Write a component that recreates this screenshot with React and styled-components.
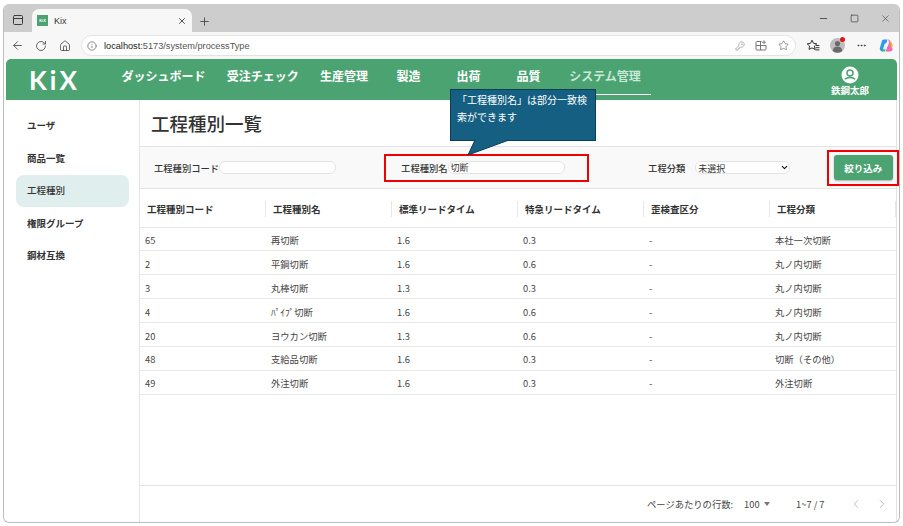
import React from 'react';
import styled, { createGlobalStyle } from 'styled-components';
import {
  PanelTop, X, Plus, Minus, Square, ArrowLeft, RotateCw, Home, Info, KeyRound, Star, ChevronLeft, ChevronRight, ChevronDown, MoreHorizontal,
} from 'lucide-react';

const GlobalStyle = createGlobalStyle`
  html, body { margin: 0; padding: 0; background: #fff; }
  body { font-family: "Noto Sans CJK JP", "Noto Sans", sans-serif; color: #333; }
  * { box-sizing: border-box; }
`;

const navItems = ['ダッシュボード', '受注チェック', '生産管理', '製造', '出荷', '品質', 'システム管理'];
const sideItems = ['ユーザ', '商品一覧', '工程種別', '権限グループ', '鋼材互換'];
const columns = ['工程種別コード', '工程種別名', '標準リードタイム', '特急リードタイム', '歪検査区分', '工程分類'];
const rows = [
  ['65', '再切断', '1.6', '0.3', '-', '本社一次切断'],
  ['2', '平鋼切断', '1.6', '0.6', '-', '丸ノ内切断'],
  ['3', '丸棒切断', '1.3', '0.3', '-', '丸ノ内切断'],
  ['4', 'ﾊﾟｲﾌﾟ切断', '1.6', '0.6', '-', '丸ノ内切断'],
  ['20', 'ヨウカン切断', '1.3', '0.6', '-', '丸ノ内切断'],
  ['48', '支給品切断', '1.6', '0.3', '-', '切断（その他）'],
  ['49', '外注切断', '1.6', '0.3', '-', '外注切断'],
];

const Page = styled.div`
  width: 903px;
  height: 526px;
  padding: 4px 3px 3px;
  overflow: hidden;
`;
const Browser = styled.div`
  height: 100%;
  display: flex;
  flex-direction: column;
  border: 1px solid #bdbdbd;
  border-top: 0;
  border-radius: 6px;
  overflow: hidden;
  background: #fff;
`;
const TabStrip = styled.div`
  height: 28px;
  flex: none;
  background: #cdcdcd;
  display: flex;
  align-items: flex-end;
  color: #333;
`;
const IconSlot = styled.div`
  width: ${(p) => p.$w || 24}px;
  height: 22px;
  flex: none;
  display: flex;
  align-items: center;
  justify-content: center;
  color: ${(p) => p.$color || '#3c3c3c'};
`;
const TabIcon = styled(IconSlot)`
  width: 28px;
  height: 24px;
`;
const Tab = styled.div`
  width: 160px;
  height: 23px;
  background: #f7f7f7;
  border-radius: 7px 7px 0 0;
  display: flex;
  align-items: center;
  padding: 0 5px;
  font-family: "Liberation Sans", sans-serif;
  font-size: 9px;
`;
const Favicon = styled.div`
  width: 11px;
  height: 11px;
  background: #4ca372;
  color: #fff;
  font-size: 4px;
  line-height: 11px;
  text-align: center;
  margin-right: 6px;
  font-weight: 700;
`;
const TabTitle = styled.span`
  flex: 1;
`;
const WindowControls = styled.div`
  margin-left: auto;
  height: 100%;
  display: flex;
  align-items: center;
  gap: 10px;
  padding-right: 3px;
`;
const Toolbar = styled.div`
  height: 27px;
  flex: none;
  background: #f7f7f7;
  display: flex;
  align-items: center;
  padding-left: 1px;
`;
const UrlBar = styled.div`
  width: 715px;
  height: 21px;
  margin-left: 4px;
  background: #fff;
  border: 1px solid #e3e3e3;
  border-radius: 11px;
  display: flex;
  align-items: center;
  padding: 0 1px 0 5px;
  font-family: "Liberation Sans", sans-serif;
  font-size: 9.2px;
  color: #555;
`;
const UrlHost = styled.span`
  color: #222;
`;
const UrlText = styled.div`
  flex: 1;
  margin-left: 7px;
`;
const AvatarWrap = styled(IconSlot)`
  position: relative;
`;
const AvatarDot = styled.span`
  position: absolute;
  top: 2px;
  right: 3px;
  width: 5px;
  height: 5px;
  border-radius: 50%;
  background: #e81123;
`;
const FavoritesSlot = styled(IconSlot)`
  margin-left: 3px;
`;
const Content = styled.div`
  flex: 1;
  min-height: 0;
  display: flex;
  flex-direction: column;
  padding: 0 2px 0 2px;
`;
const Header = styled.header`
  height: 41px;
  flex: none;
  background: #4ca372;
  border-radius: 5px 5px 0 0;
  display: flex;
  align-items: center;
  color: #fff;
`;
const Logo = styled.div`
  width: 105px;
  padding-left: 23px;
  font-family: "Lato", sans-serif;
  font-weight: 700;
  font-size: 26px;
  letter-spacing: 3px;
  line-height: 1;
`;
const Nav = styled.nav`
  display: flex;
  height: 100%;
`;
const NavItem = styled.div`
  min-width: 60px;
  padding: 0 10.6px 3px;
  display: flex;
  align-items: center;
  justify-content: center;
  font-size: 12px;
  font-weight: 700;
  color: ${(p) => (p.$active ? '#c9e8d6' : '#fff')};
  border-bottom: ${(p) => (p.$active ? '1px solid #fff' : '0')};
  height: 36px;
  align-self: flex-start;
`;
const UserBox = styled.div`
  margin-left: auto;
  width: 40px;
  margin-right: 27px;
  display: flex;
  flex-direction: column;
  align-items: center;
  font-size: 9.5px;
  font-weight: 700;
  line-height: 12px;
  white-space: nowrap;
  padding-top: 2px;
`;
const Body = styled.div`
  flex: 1;
  min-height: 0;
  display: flex;
`;
const Sidebar = styled.aside`
  width: 134px;
  flex: none;
  border-right: 1px solid #e4e4e4;
  padding: 9.5px 10px 0 10px;
`;
const SideItem = styled.div`
  height: 32.5px;
  padding: 0 0 1px 11px;
  display: flex;
  align-items: center;
  font-size: 9.5px;
  font-weight: ${(p) => (p.$active ? 500 : 700)};
  color: #333;
  border-radius: 8px;
  background: ${(p) => (p.$active ? '#e0efee' : 'transparent')};
`;
const Main = styled.main`
  flex: 1;
  min-width: 0;
  display: flex;
  flex-direction: column;
  border-right: 1px solid #e4e4e4;
`;
const TitleRow = styled.div`
  height: 47px;
  flex: none;
  padding: 10px 0 0 11px;
  border-bottom: 1px solid #e4e4e4;
`;
const Title = styled.h1`
  margin: 0;
  font-size: 18.5px;
  font-weight: 500;
  line-height: 27px;
  color: #333;
`;
const FilterBar = styled.div`
  height: 42px;
  flex: none;
  background: #f9f9f9;
  border-bottom: 1px solid #e4e4e4;
  display: flex;
  align-items: center;
  padding-left: 14px;
  position: relative;
`;
const Field = styled.div`
  flex: none;
  display: flex;
  align-items: center;
  font-size: 9.3px;
  font-weight: 500;
  white-space: nowrap;
`;
const HighlightField = styled(Field)`
  height: 28px;
  width: 205px;
  margin-left: 48px;
  padding-left: 15px;
  border: 2px solid #f00000;
`;
const SelectField = styled(Field)`
  margin-left: 59px;
`;
const TextInput = styled.input`
  width: 117px;
  height: 13px;
  padding: 0 2px;
  border: 1px solid #e3e3e3;
  border-radius: 6px;
  background: #fff;
  font-family: inherit;
  font-size: 9px;
  color: #333;
  outline: none;
`;
const SelectWrap = styled.div`
  position: relative;
  margin-left: 10px;
  width: 95px;
  height: 13px;
`;
const SelectBox = styled.select`
  width: 100%;
  height: 100%;
  display: block;
  padding: 0 0 0 2px;
  border: 1px solid #e3e3e3;
  border-radius: 6px;
  background: #fff;
  font-family: inherit;
  font-size: 9px;
  color: #333;
  appearance: none;
  outline: none;
`;
const SelectArrow = styled(ChevronDown)`
  position: absolute;
  right: 1px;
  top: 2px;
  color: #111;
  pointer-events: none;
`;
const ButtonFrame = styled.div`
  margin-left: 37px;
  width: 72px;
  height: 36px;
  flex: none;
  border: 2px solid #f00000;
  display: flex;
  align-items: center;
  justify-content: center;
  background: #f9f9f9;
`;
const FilterButton = styled.button`
  width: 59px;
  height: 25px;
  border: 0;
  border-radius: 3px;
  background: #4ca372;
  color: #fff;
  font-family: inherit;
  font-size: 9.5px;
  font-weight: 700;
  box-shadow: 0 1px 2px rgba(0, 0, 0, 0.3);
`;
const Callout = styled.div`
  position: absolute;
  left: 310px;
  top: -58px;
  width: 146px;
  height: 52px;
  padding: 1px 5px 0 6px;
  background: #156082;
  border: 1px solid #0e3d54;
  color: #fff;
  font-size: 10px;
  line-height: 17px;
  z-index: 5;
`;
const CalloutTail = styled.svg`
  position: absolute;
  left: 16px;
  top: 49px;
`;
const Table = styled.div`
  flex: 1;
  min-height: 0;
`;
const HeadRow = styled.div`
  height: 38.5px;
  padding-top: 2px;
  display: grid;
  grid-template-columns: repeat(6, 126px);
  align-items: center;
  border-bottom: 1px solid #e8e8e8;
`;
const HeadCell = styled.div`
  height: 16px;
  padding-left: 7px;
  display: flex;
  align-items: center;
  font-size: 9.5px;
  font-weight: 700;
  color: #333;
  border-right: 1px solid #e8e8e8;
`;
const DataRow = styled.div`
  height: 23.9px;
  display: grid;
  grid-template-columns: repeat(6, 126px);
  align-items: center;
  border-bottom: 1px solid #e8e8e8;
`;
const Cell = styled.div`
  padding: 2px 0 0 5px;
  font-size: 9.3px;
  color: #444;
  white-space: nowrap;
`;
const Footer = styled.div`
  height: 37px;
  flex: none;
  border-top: 1px solid #e4e4e4;
  display: flex;
  align-items: center;
  padding-left: 507px;
  font-size: 9.3px;
  color: #444;
`;
const PageSize = styled.div`
  margin-left: 11px;
  width: 52px;
  display: flex;
  align-items: center;
  gap: 4px;
`;
const Caret = styled.span`
  width: 0;
  height: 0;
  border-left: 3.5px solid transparent;
  border-right: 3.5px solid transparent;
  border-top: 4px solid #777;
`;
const PageRange = styled.div`
  width: 53px;
`;
const PagerIcons = styled.div`
  display: flex;
  gap: 12px;
  color: #b5b5b5;
`;

function Copilot() {
  return (
    <svg width="15" height="15" viewBox="0 0 16 16">
      <path d="M5 1.5h4L6.5 12 4 14.5C2 14.5.5 13 .8 11L3 3.5C3.3 2.3 4 1.5 5 1.5z" fill="#2f9be8" />
      <path d="M9 1.5c1.5 0 2.6.7 3 2l2.4 8c.3 1.5-.8 3-2.5 3H7l1.5-4.5 2-7z" fill="#f06ab0" />
      <path d="M6 6l5-2.5-1 4-4 6.5-1.5-3z" fill="#fff" opacity="0.85" />
      <path d="M11.5 3.5c1.5.2 3 2 3.2 5L13 11z" fill="#f8b133" />
      <path d="M2 12c2 1 4 .5 5-.5l-.5 3H3.5z" fill="#35c26e" />
    </svg>
  );
}

function ProfileAvatar() {
  return (
    <svg width="15" height="15" viewBox="0 0 15 15">
      <circle cx="7.5" cy="7.5" r="7.5" fill="#bdbdbd" />
      <circle cx="7.5" cy="5.6" r="2.6" fill="#6a6a6a" />
      <path d="M2.6 13c.5-3 2.5-4.4 4.9-4.4s4.4 1.4 4.9 4.4a7.5 7.5 0 0 1-9.8 0z" fill="#6a6a6a" />
    </svg>
  );
}

function FavoritesIcon() {
  return (
    <svg width="14" height="13" viewBox="0 0 14 13" fill="none" stroke="#333" strokeWidth="1">
      <path d="M6 1.2l1.5 3.1 3.3.5-2.4 2.3.6 3.3L6 8.9l-3 1.5.6-3.3L1.2 4.8l3.3-.5z" />
      <path d="M10 6.5h3.4M9.6 8.7h3.8M9.2 10.9h4.2" />
    </svg>
  );
}

function SplitTabIcon() {
  return (
    <svg width="12" height="11" viewBox="0 0 12 11" fill="none" stroke="#777" strokeWidth="1">
      <path d="M6.5 1.5H2a1 1 0 0 0-1 1V9a1 1 0 0 0 1 1h8a1 1 0 0 0 1-1V5.5H1M5.5 1.5V10" />
      <path d="M9 .5v3.5M7.2 2.2h3.6" />
    </svg>
  );
}

function UserIcon() {
  return (
    <svg width="18" height="18" viewBox="0 0 18 18">
      <circle cx="9" cy="9" r="8.5" fill="#fff" />
      <circle cx="9" cy="7" r="3" fill="#fff" stroke="#4ca372" strokeWidth="1.5" />
      <path d="M3.8 13.2c1.4-1.2 3.2-1.7 5.2-1.7s3.8.5 5.2 1.7" fill="none" stroke="#4ca372" strokeWidth="1.5" />
    </svg>
  );
}

export default function App() {
  return (
    <Page>
      <GlobalStyle />
      <Browser>
        <TabStrip>
          <TabIcon><PanelTop size={12} strokeWidth={2} /></TabIcon>
          <Tab>
            <Favicon>KiX</Favicon>
            <TabTitle>Kix</TabTitle>
            <X size={10} strokeWidth={2} />
          </Tab>
          <IconSlot $w={25}><Plus size={13} strokeWidth={1.5} /></IconSlot>
          <WindowControls>
            <IconSlot $w={21}><Minus size={11} strokeWidth={1.8} /></IconSlot>
            <IconSlot $w={21}><Square size={9} strokeWidth={1.8} /></IconSlot>
            <IconSlot $w={21}><X size={11} strokeWidth={1.3} /></IconSlot>
          </WindowControls>
        </TabStrip>
        <Toolbar>
          <IconSlot><ArrowLeft size={13} strokeWidth={1.5} /></IconSlot>
          <IconSlot><RotateCw size={12} strokeWidth={1.5} /></IconSlot>
          <IconSlot><Home size={12} strokeWidth={1.5} /></IconSlot>
          <UrlBar>
            <Info size={10} color="#777" />
            <UrlText><UrlHost>localhost</UrlHost>:5173/system/processType</UrlText>
            <IconSlot $w={21} $color="#777"><KeyRound size={10} strokeWidth={1.3} /></IconSlot>
            <IconSlot $w={22}><SplitTabIcon /></IconSlot>
            <IconSlot $w={22} $color="#555"><Star size={11} strokeWidth={1.3} /></IconSlot>
          </UrlBar>
          <FavoritesSlot $w={27}><FavoritesIcon /></FavoritesSlot>
          <AvatarWrap $w={22}>
            <ProfileAvatar />
            <AvatarDot />
          </AvatarWrap>
          <IconSlot $w={26}><MoreHorizontal size={11} /></IconSlot>
          <IconSlot $w={24}><Copilot /></IconSlot>
        </Toolbar>
        <Content>
          <Header>
            <Logo>KiX</Logo>
            <Nav>
              {navItems.map((item) => (
                <NavItem key={item} $active={item === 'システム管理'}>{item}</NavItem>
              ))}
            </Nav>
            <UserBox>
              <UserIcon />
              鉄鋼太郎
            </UserBox>
          </Header>
          <Body>
            <Sidebar>
              {sideItems.map((item) => (
                <SideItem key={item} $active={item === '工程種別'}>{item}</SideItem>
              ))}
            </Sidebar>
            <Main>
              <TitleRow>
                <Title>工程種別一覧</Title>
              </TitleRow>
              <FilterBar>
                <Field>
                  工程種別コード
                  <TextInput readOnly value="" />
                </Field>
                <HighlightField>
                  工程種別名
                  <TextInput readOnly value="切断" />
                </HighlightField>
                <SelectField>
                  工程分類
                  <SelectWrap>
                    <SelectBox defaultValue="none">
                      <option value="none">未選択</option>
                    </SelectBox>
                    <SelectArrow size={9} strokeWidth={3} />
                  </SelectWrap>
                </SelectField>
                <ButtonFrame>
                  <FilterButton>絞り込み</FilterButton>
                </ButtonFrame>
                <Callout>
                  「工程種別名」は部分一致検索ができます
                  <CalloutTail width="44" height="18" viewBox="0 0 44 18">
                    <path d="M8 1 L1 16 L42 1" fill="#156082" stroke="#0e3d54" strokeWidth="1" />
                  </CalloutTail>
                </Callout>
              </FilterBar>
              <Table>
                <HeadRow>
                  {columns.map((col) => <HeadCell key={col}>{col}</HeadCell>)}
                </HeadRow>
                {rows.map((row) => (
                  <DataRow key={row[0]}>
                    {row.map((value, i) => <Cell key={columns[i]}>{value}</Cell>)}
                  </DataRow>
                ))}
              </Table>
              <Footer>
                ページあたりの行数:
                <PageSize>100 <Caret /></PageSize>
                <PageRange>1~7 / 7</PageRange>
                <PagerIcons>
                  <ChevronLeft size={14} strokeWidth={1.5} />
                  <ChevronRight size={14} strokeWidth={1.5} />
                </PagerIcons>
              </Footer>
            </Main>
          </Body>
        </Content>
      </Browser>
    </Page>
  );
}
